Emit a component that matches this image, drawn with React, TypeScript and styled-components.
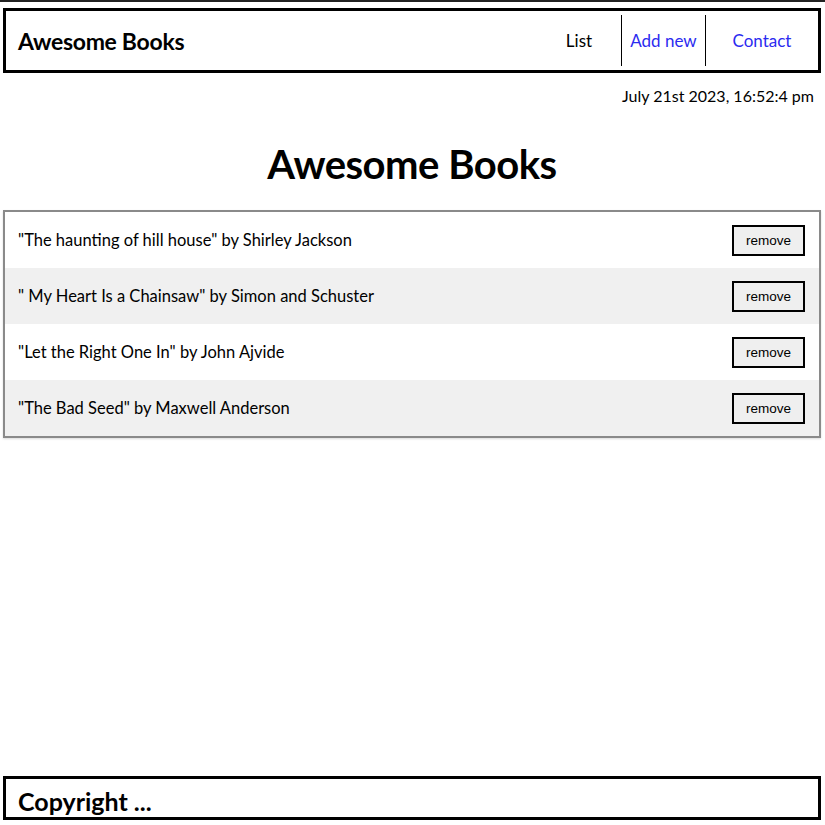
import React from 'react'
import styled, { createGlobalStyle } from 'styled-components'

const GlobalStyle = createGlobalStyle`
  html, body {
    margin: 0;
    padding: 0;
    background: #fff;
  }
  body {
    border-top: 2px solid #222;
    font-family: 'Lato', 'Noto Sans', sans-serif;
    color: #000;
  }
`

const Page = styled.div`
  display: flex;
  flex-direction: column;
  min-height: 823px;
  padding: 6px 4px 0 3px;
  box-sizing: border-box;
`

const Header = styled.header`
  display: flex;
  align-items: center;
  justify-content: space-between;
  height: 65px;
  border: 3px solid #000;
  box-sizing: border-box;
  padding: 0 0 0 12px;
`

const Brand = styled.h1`
  margin: 0;
  font-size: 23px;
  font-weight: 700;
  letter-spacing: -0.3px;
`

const Nav = styled.nav`
  display: flex;
  align-self: stretch;
  align-items: stretch;
  padding: 4px 0;
`

const NavLink = styled.a<{ $active?: boolean; $width: number; $last?: boolean }>`
  display: flex;
  align-items: center;
  justify-content: center;
  width: ${(p) => p.$width}px;
  font-size: 17px;
  color: ${(p) => (p.$active ? '#000' : '#2b2bf0')};
  text-decoration: none;
  border-right: ${(p) => (p.$last ? 'none' : '1px solid #000')};
`

const DateLine = styled.div`
  text-align: right;
  font-size: 16px;
  padding: 13px 7px 0 0;
`

const Title = styled.h2`
  margin: 35px 0 22px;
  text-align: center;
  font-size: 40px;
  font-weight: 700;
  letter-spacing: -0.5px;
  line-height: 48px;
`

const BookList = styled.ul`
  list-style: none;
  margin: 0;
  padding: 0;
  border: 2px solid #8a8a8a;
  box-shadow: 0 1px 2px rgba(0, 0, 0, 0.15);
`

const BookRow = styled.li<{ $odd: boolean }>`
  display: flex;
  align-items: center;
  justify-content: space-between;
  height: 56px;
  padding: 0 14px 0 13px;
  background: ${(p) => (p.$odd ? '#f0f0f0' : '#fff')};
  font-size: 16.5px;
`

const RemoveButton = styled.button`
  width: 73px;
  height: 31px;
  border: 2px solid #000;
  background: #efefef;
  font-family: 'Liberation Sans', Arial, sans-serif;
  font-size: 13.5px;
  color: #000;
  padding: 0;
  cursor: pointer;
`

const Footer = styled.footer`
  margin-top: auto;
  margin-bottom: 5px;
  height: 44px;
  border: 3px solid #000;
  box-sizing: border-box;
  padding: 0 12px;
  overflow: hidden;
`

const FooterText = styled.p`
  margin: 0;
  font-size: 25px;
  font-weight: 700;
  line-height: 44px;
`

const books = [
  { title: 'The haunting of hill house', author: 'Shirley Jackson' },
  { title: ' My Heart Is a Chainsaw', author: 'Simon and Schuster' },
  { title: 'Let the Right One In', author: 'John Ajvide' },
  { title: 'The Bad Seed', author: 'Maxwell Anderson' },
]

const App = () => {
  return (
    <>
      <GlobalStyle />
      <Page>
        <Header>
          <Brand>Awesome Books</Brand>
          <Nav>
            <NavLink href="#list" $active $width={84}>List</NavLink>
            <NavLink href="#add" $width={83}>Add new</NavLink>
            <NavLink href="#contact" $width={112} $last>Contact</NavLink>
          </Nav>
        </Header>
        <DateLine>July 21st 2023, 16:52:4 pm</DateLine>
        <Title>Awesome Books</Title>
        <BookList>
          {books.map((b, i) => (
            <BookRow key={b.title} $odd={i % 2 === 1}>
              <span>"{b.title}" by {b.author}</span>
              <RemoveButton>remove</RemoveButton>
            </BookRow>
          ))}
        </BookList>
        <Footer>
          <FooterText>Copyright ...</FooterText>
        </Footer>
      </Page>
    </>
  )
}

export default App
